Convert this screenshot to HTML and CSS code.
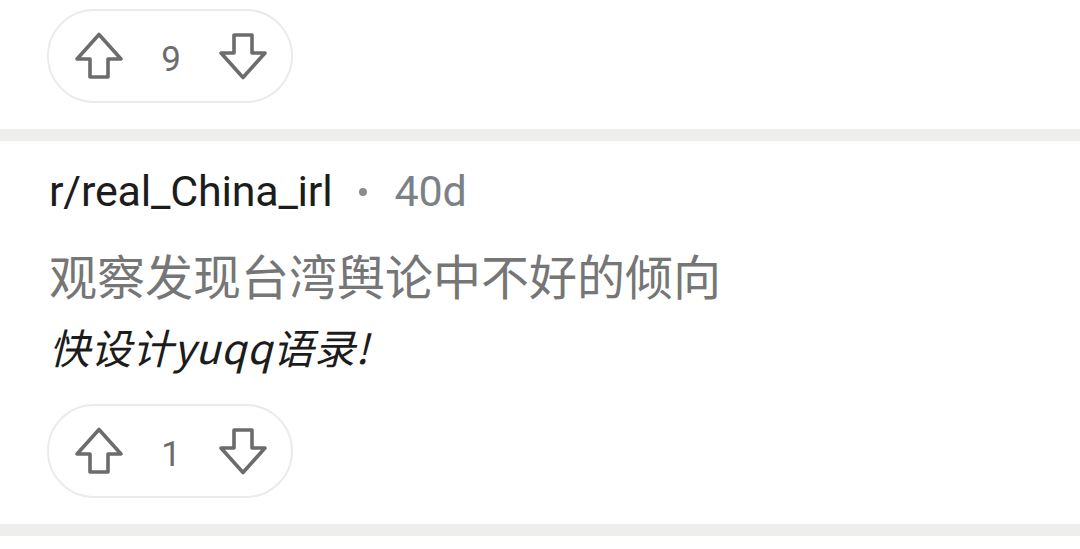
FILE: index.html
```html
<!DOCTYPE html>
<html lang="zh-CN">
<head>
<meta charset="UTF-8">
<meta name="viewport" content="width=device-width, initial-scale=1.0">
<title>r/real_China_irl</title>
<link rel="stylesheet" href="styles.css">
</head>
<body>

<!-- cola del comentario anterior -->
<section class="post post-tail">
    <div class="votes">
        <svg class="vote-icon" viewBox="0 0 48 48"><path d="M24 2.5 L46 27 H33 V45 H15 V27 H2 Z"/></svg>
        <span class="score">9</span>
        <svg class="vote-icon" viewBox="0 0 48 48"><path d="M15 3 H33 V21 H46 L24 45.5 L2 21 H15 Z"/></svg>
    </div>
</section>

<div class="divider"></div>

<article class="post">
    <div class="post-meta">
        <span class="sub">r/real_China_irl</span>
        <span class="dot"></span>
        <span class="age">40d</span>
    </div>
    <h2 class="post-title">观察发现台湾舆论中不好的倾向</h2>
    <p class="post-body">快设计yuqq语录!</p>
    <div class="votes">
        <svg class="vote-icon" viewBox="0 0 48 48"><path d="M24 2.5 L46 27 H33 V45 H15 V27 H2 Z"/></svg>
        <span class="score">1</span>
        <svg class="vote-icon" viewBox="0 0 48 48"><path d="M15 3 H33 V21 H46 L24 45.5 L2 21 H15 Z"/></svg>
    </div>
</article>

<div class="divider"></div>

</body>
</html>
```

FILE: styles.css
```css
/* Estilos de la lista */
body {
    margin: 0;
    padding: 0;
    background-color: #fff;
    font-family: Roboto, "Noto Sans CJK SC", sans-serif;
}

.post {
    padding: 25px 0 26px 49px;
}

.post-tail {
    padding-top: 9px;
}

.divider {
    height: 12px;
    background-color: #eeeeec;
}

.post-meta {
    display: flex;
    align-items: center;
    height: 50px;
    font-size: 43px;
    letter-spacing: -0.2px;
}

.sub {
    color: #1c1c1c;
}

.dot {
    width: 8px;
    height: 8px;
    border-radius: 50%;
    background-color: #8a8d90;
    margin: 2px 27px 0 27px;
}

.age {
    color: #7b8186;
}

.post-title {
    margin: 28px 0 0;
    font-family: "Noto Sans CJK SC", sans-serif;
    font-size: 48px;
    font-weight: normal;
    line-height: 60px;
    color: #767676;
}

.post-body {
    margin: 17px 0 0;
    font-family: "Noto Sans CJK SC", sans-serif;
    font-size: 41px;
    font-style: italic;
    line-height: 50px;
    letter-spacing: 0.5px;
    color: #1c1c1c;
}

.post .votes {
    margin-top: 33px;
}

.votes {
    display: flex;
    align-items: center;
    width: 242px;
    height: 90px;
    margin-left: -2px;
    border: 2px solid #ebebeb;
    border-radius: 47px;
    box-sizing: content-box;
}

.post-tail .votes {
    margin-top: 0;
}

.vote-icon {
    width: 48px;
    height: 48px;
    fill: none;
    stroke: #6c6c6c;
    stroke-width: 3.6;
    stroke-linejoin: round;
}

.votes .vote-icon:first-child {
    margin-left: 26px;
}

.score {
    width: 96px;
    padding-top: 6px;
    text-align: center;
    font-size: 35px;
    color: #6c6c6c;
}
```
